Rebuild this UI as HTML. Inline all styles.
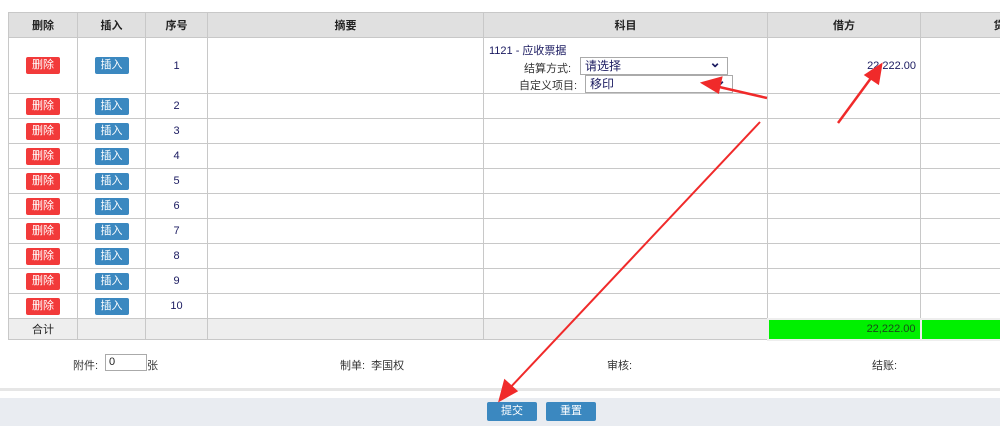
<!DOCTYPE html>
<html><head><meta charset="utf-8"><style>
*{margin:0;padding:0;box-sizing:border-box}
body{width:1000px;height:426px;overflow:hidden;background:#fff;position:relative;font-family:"Liberation Sans","Noto Sans CJK SC",sans-serif;font-size:11px;color:#222}
table{position:absolute;left:8px;top:12px;border-collapse:collapse;table-layout:fixed;width:1080px}
td,th{border:1px solid #c8c8c8;text-align:center;font-weight:normal;color:#1a1a60}
th{background:#e0e0e0;height:25px;color:#222;font-weight:bold}
td{height:25px}
.b{display:inline-block;width:34px;height:17px;line-height:17px;color:#fff;border-radius:2px;font-size:11px}
.d{background:#f23a3a}.i{background:#3b88c0}
tr.t td{background:#eeeeee;height:21px;color:#222}
.g{background:#00f000!important;text-align:right;padding-right:4px;color:#1a4a1a!important;border:2px solid #eee}
.sel{position:absolute;border:1px solid #aaa;height:18px;font-size:12px;padding-left:4px;line-height:16px;color:#1a1a60;background:#fff}
.sel::after{content:"⌄";position:absolute;right:6px;top:-4px;font-size:14px;font-weight:bold}
.f{position:absolute;top:357px;font-size:11px;color:#333}
</style></head><body>
<table>
<colgroup><col style="width:69px"><col style="width:68px"><col style="width:62px"><col style="width:276px"><col style="width:284px"><col style="width:153px"><col style="width:168px"></colgroup>
<tr><th>删除</th><th>插入</th><th>序号</th><th>摘要</th><th>科目</th><th>借方</th><th>贷方</th></tr>
<tr><td style="height:56px"><span class="b d">删除</span></td><td><span class="b i">插入</span></td><td>1</td><td></td><td style="position:relative;text-align:left;vertical-align:top">
<div style="position:absolute;left:5px;top:4px">1121 - 应收票据</div>
<div style="position:absolute;left:40px;top:22px;color:#333">结算方式:</div>
<div class="sel" style="left:96px;top:19px;width:148px">请选择</div>
<div style="position:absolute;left:35px;top:39px;color:#333">自定义项目:</div>
<div class="sel" style="left:101px;top:37px;width:148px">移印</div>
</td><td style="text-align:right;padding-right:4px">22,222.00</td><td></td></tr>
<tr><td><span class="b d">删除</span></td><td><span class="b i">插入</span></td><td>2</td><td></td><td></td><td></td><td></td></tr>
<tr><td><span class="b d">删除</span></td><td><span class="b i">插入</span></td><td>3</td><td></td><td></td><td></td><td></td></tr>
<tr><td><span class="b d">删除</span></td><td><span class="b i">插入</span></td><td>4</td><td></td><td></td><td></td><td></td></tr>
<tr><td><span class="b d">删除</span></td><td><span class="b i">插入</span></td><td>5</td><td></td><td></td><td></td><td></td></tr>
<tr><td><span class="b d">删除</span></td><td><span class="b i">插入</span></td><td>6</td><td></td><td></td><td></td><td></td></tr>
<tr><td><span class="b d">删除</span></td><td><span class="b i">插入</span></td><td>7</td><td></td><td></td><td></td><td></td></tr>
<tr><td><span class="b d">删除</span></td><td><span class="b i">插入</span></td><td>8</td><td></td><td></td><td></td><td></td></tr>
<tr><td><span class="b d">删除</span></td><td><span class="b i">插入</span></td><td>9</td><td></td><td></td><td></td><td></td></tr>
<tr><td><span class="b d">删除</span></td><td><span class="b i">插入</span></td><td>10</td><td></td><td></td><td></td><td></td></tr>
<tr class="t"><td>合计</td><td></td><td></td><td></td><td></td><td class="g">22,222.00</td><td class="g"></td></tr>
</table>
<div class="f" style="left:73px">附件:</div>
<div style="position:absolute;left:105px;top:354px;width:42px;height:17px;border:1px solid #aaa;font-size:11px;padding-left:3px;line-height:15px">0</div>
<div class="f" style="left:147px">张</div>
<div class="f" style="left:340px">制单: &nbsp;李国权</div>
<div class="f" style="left:607px">审核:</div>
<div class="f" style="left:872px">结账:</div>
<div style="position:absolute;left:0;top:388px;width:1000px;height:3px;background:#e6e6e6"></div>
<div style="position:absolute;left:0;top:398px;width:1000px;height:28px;background:#e9ecf1"></div>
<div class="b i" style="position:absolute;left:487px;top:402px;width:50px;height:19px;line-height:19px;text-align:center">提交</div>
<div class="b i" style="position:absolute;left:546px;top:402px;width:50px;height:19px;line-height:19px;text-align:center">重置</div>
<svg style="position:absolute;left:0;top:0" width="1000" height="426">
<g stroke="#f02a2a" stroke-width="2.5" fill="#f02a2a">
<line x1="767" y1="98" x2="715" y2="86"/><polygon points="703,83 721,78 718,92"/>
<line x1="838" y1="123" x2="874" y2="74"/><polygon points="881,65 878,83 866,75"/>
<line x1="760" y1="122" x2="508" y2="390" stroke-width="2"/><polygon points="500,400 505,381 516,391"/>
</g></svg>
</body></html>
